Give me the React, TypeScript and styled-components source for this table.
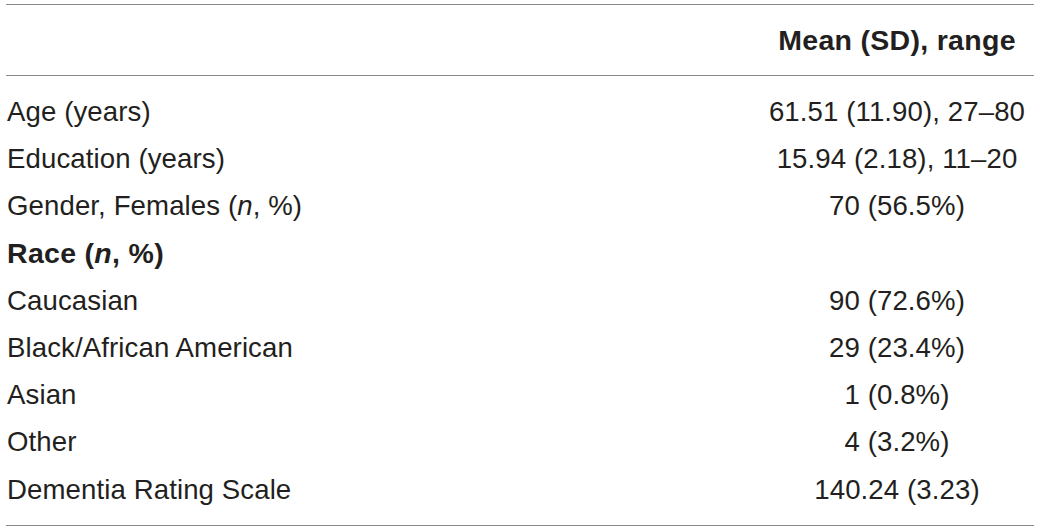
import React from "react";
import styled, { createGlobalStyle } from "styled-components";

const Global = createGlobalStyle`
  html, body { margin: 0; padding: 0; background: #ffffff; }
  body { font-family: "Liberation Sans", Arial, sans-serif; color: #231f20; }
`;

const Table = styled.div`
  margin: 4px 6px 0 6px;
  width: 1028px;
  border-top: 1px solid #8a8a8a;
  border-bottom: 1px solid #8a8a8a;
`;

const Head = styled.div`
  display: grid;
  grid-template-columns: 1fr 274px;
  align-items: center;
  height: 70px;
  border-bottom: 1px solid #8a8a8a;
`;

const Body = styled.div`
  padding: 12px 0 12px 0;
`;

const Row = styled.div`
  display: grid;
  grid-template-columns: 1fr 274px;
  align-items: center;
  height: 47.25px;
`;

const Label = styled.div<{ $bold?: boolean }>`
  font-size: ${(p) => (p.$bold ? "28.5px" : "27.6px")};
  font-weight: ${(p) => (p.$bold ? 700 : 400)};
  letter-spacing: ${(p) => (p.$bold ? "0.3px" : "0.1px")};
  padding-left: 1px;
  white-space: nowrap;
`;

const Value = styled.div<{ $bold?: boolean }>`
  font-size: ${(p) => (p.$bold ? "28.5px" : "27.6px")};
  font-weight: ${(p) => (p.$bold ? 700 : 400)};
  letter-spacing: ${(p) => (p.$bold ? "0.3px" : "0.1px")};
  text-align: center;
  white-space: nowrap;
`;

const rows: { label: React.ReactNode; value: string; bold?: boolean }[] = [
  { label: "Age (years)", value: "61.51 (11.90), 27–80" },
  { label: "Education (years)", value: "15.94 (2.18), 11–20" },
  { label: <>Gender, Females (<i>n</i>, %)</>, value: "70 (56.5%)" },
  { label: <>Race (<i>n</i>, %)</>, value: "", bold: true },
  { label: "Caucasian", value: "90 (72.6%)" },
  { label: "Black/African American", value: "29 (23.4%)" },
  { label: "Asian", value: "1 (0.8%)" },
  { label: "Other", value: "4 (3.2%)" },
  { label: "Dementia Rating Scale", value: "140.24 (3.23)" },
];

export default function App() {
  return (
    <>
      <Global />
      <Table>
        <Head>
          <Label />
          <Value $bold>Mean (SD), range</Value>
        </Head>
        <Body>
          {rows.map((r, i) => (
            <Row key={i}>
              <Label $bold={r.bold}>{r.label}</Label>
              <Value>{r.value}</Value>
            </Row>
          ))}
        </Body>
      </Table>
    </>
  );
}
